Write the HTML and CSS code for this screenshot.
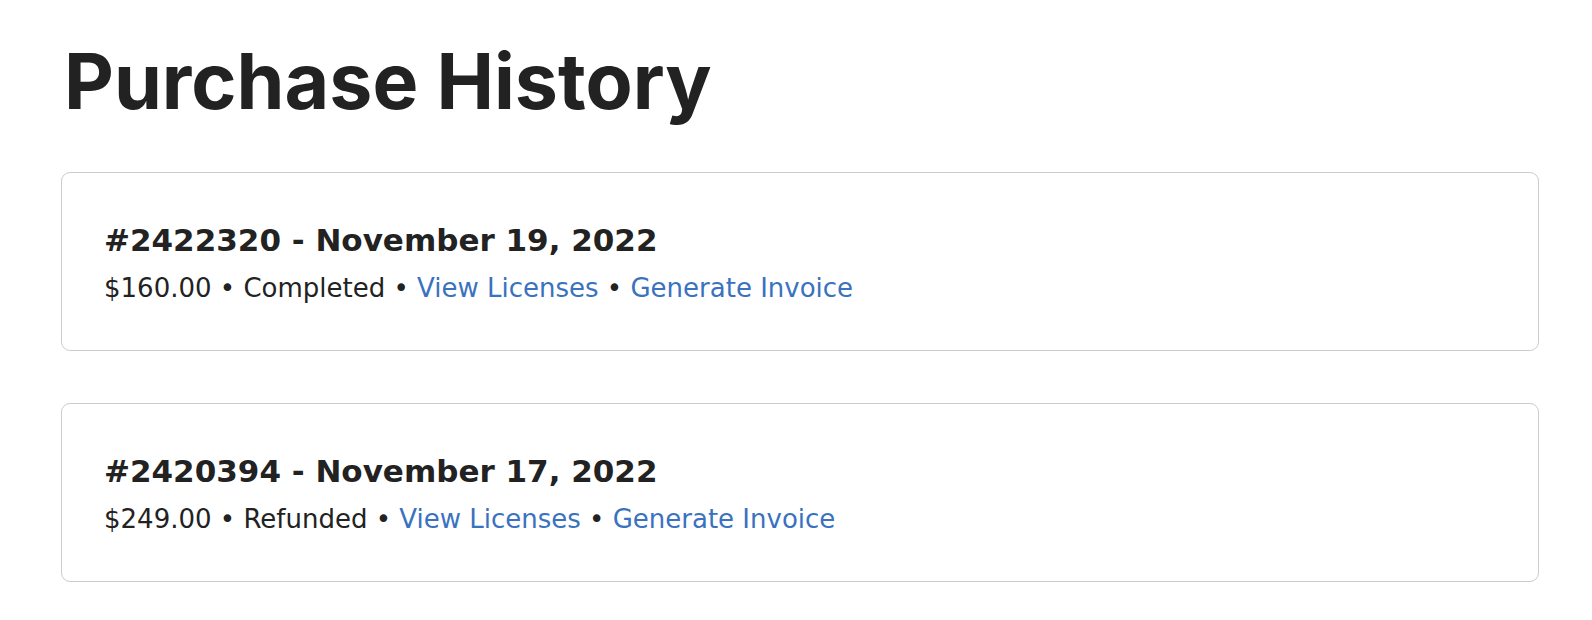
FILE: index.html
```html
<!doctype html>
<html lang="en">
<head>
    <meta charset="utf-8">
    <title>Purchase History</title>
    <link rel="stylesheet" href="styles.css">
</head>
<body>
<main class="page">
    <h1 class="page-title">Purchase History</h1>

    <div class="order">
        <h2 class="order-title">#2422320 - November 19, 2022</h2>
        <p class="order-meta">
            $160.00 &bull; Completed &bull;
            <a href="#">View Licenses</a> &bull;
            <a href="#">Generate Invoice</a>
        </p>
    </div>

    <div class="order">
        <h2 class="order-title">#2420394 - November 17, 2022</h2>
        <p class="order-meta">
            $249.00 &bull; Refunded &bull;
            <a href="#">View Licenses</a> &bull;
            <a href="#">Generate Invoice</a>
        </p>
    </div>
</main>
</body>
</html>
```

FILE: styles.css
```css
body {
    margin: 0;
    font-family: Inter, "Noto Sans", sans-serif;
    color: #222;
    background-color: #fff;
}
.page {
    margin: 0 53px 0 61px;
}
.page-title {
    margin: 35px 0 45px 3px;
    font-size: 77px;
    line-height: 1.2;
    font-weight: 700;
}
.order {
    border: 1px solid #ccc;
    border-radius: 9px;
    padding: 47px 42px 46px;
    margin-bottom: 52px;
    font-family: "DejaVu Sans", sans-serif;
}
.order-title {
    margin: 0 0 12px;
    font-size: 31px;
    line-height: 40px;
    font-weight: 700;
}
.order-meta {
    margin: 0;
    font-size: 26px;
    line-height: 32px;
}
.order-meta a {
    color: #3a72c0;
    text-decoration: none;
}
```
